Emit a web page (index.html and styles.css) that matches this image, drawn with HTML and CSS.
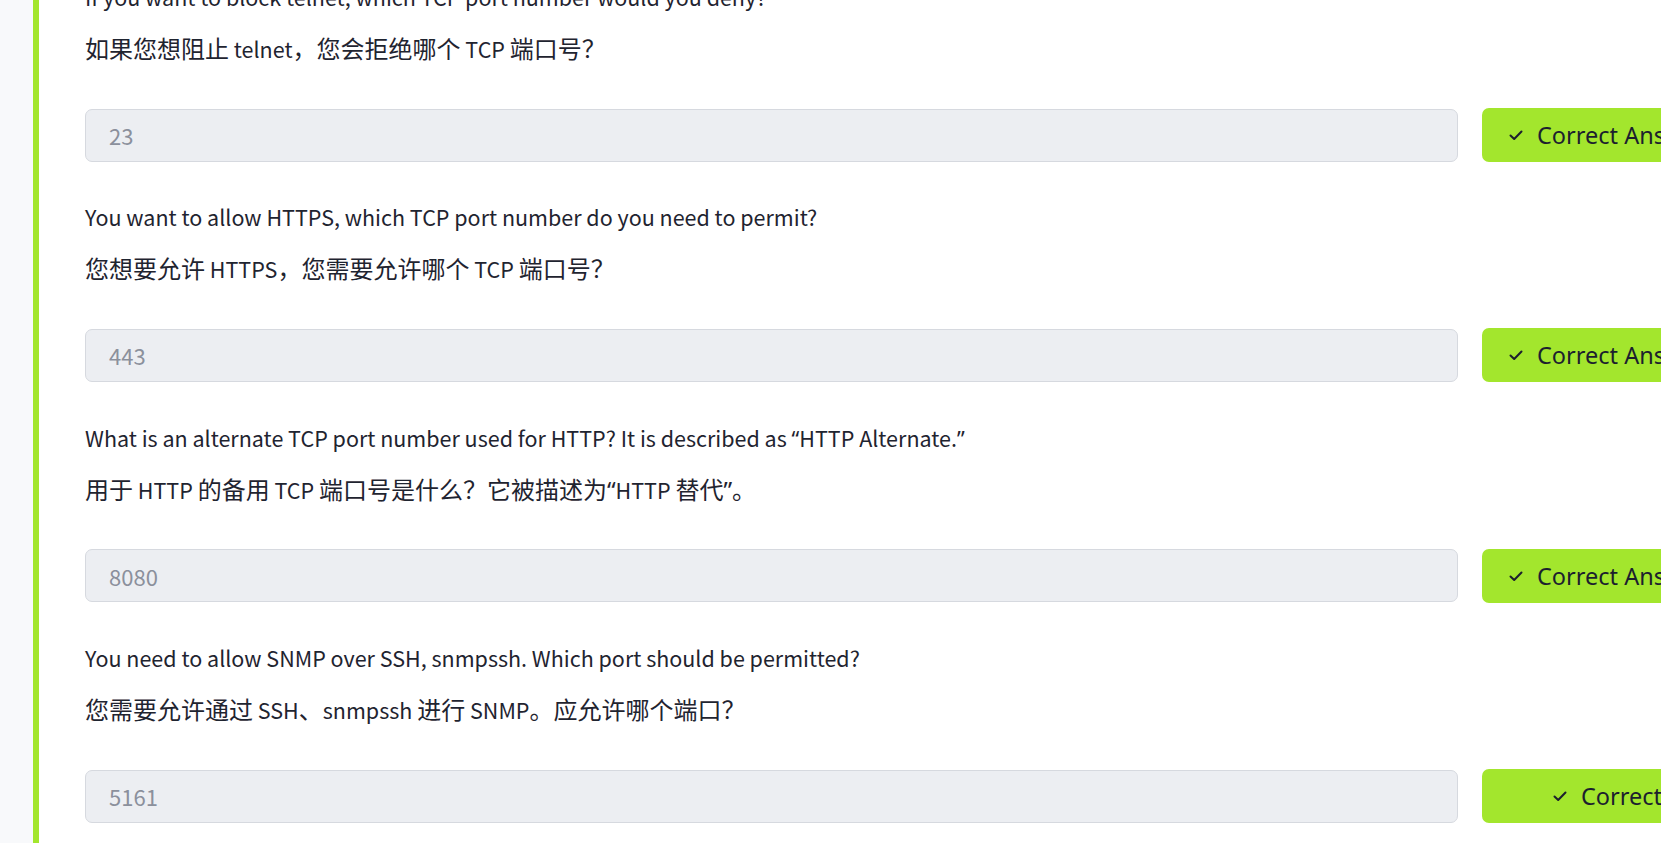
FILE: index.html
```html
<!DOCTYPE html>
<html lang="zh">
<head>
<meta charset="utf-8">
<title>Ports Quiz</title>
<link rel="stylesheet" href="styles.css">
</head>
<body>
<div class="layout">
  <aside class="rail"></aside>
  <main class="content">
    <section class="question">
      <p class="en" lang="en">If you want to block telnet, which TCP port number would you deny?</p>
      <p class="zh">如果您想阻止<span class="lat"> telnet</span>，您会拒绝哪个<span class="lat"> TCP </span>端口号？</p>
      <div class="answer-row">
        <div class="answer-input">23</div>
        <button class="correct-btn"><svg class="check" viewBox="0 0 16 16" width="16" height="16"><path d="M2.5 8.5 L6.2 12 L13.5 4.5" fill="none" stroke="currentColor" stroke-width="2" stroke-linecap="round" stroke-linejoin="round"/></svg><span>Correct Answer</span></button>
      </div>
    </section>
    <section class="question">
      <p class="en" lang="en">You want to allow HTTPS, which TCP port number do you need to permit?</p>
      <p class="zh">您想要允许<span class="lat"> HTTPS</span>，您需要允许哪个<span class="lat"> TCP </span>端口号？</p>
      <div class="answer-row">
        <div class="answer-input">443</div>
        <button class="correct-btn"><svg class="check" viewBox="0 0 16 16" width="16" height="16"><path d="M2.5 8.5 L6.2 12 L13.5 4.5" fill="none" stroke="currentColor" stroke-width="2" stroke-linecap="round" stroke-linejoin="round"/></svg><span>Correct Answer</span></button>
      </div>
    </section>
    <section class="question">
      <p class="en" lang="en">What is an alternate TCP port number used for HTTP? It is described as <span class="q">“</span>HTTP Alternate.<span class="q">”</span></p>
      <p class="zh">用于<span class="lat"> HTTP </span>的备用<span class="lat"> TCP </span>端口号是什么？它被描述为<span class="q">“</span><span class="lat">HTTP </span>替代<span class="q">”</span>。</p>
      <div class="answer-row">
        <div class="answer-input">8080</div>
        <button class="correct-btn"><svg class="check" viewBox="0 0 16 16" width="16" height="16"><path d="M2.5 8.5 L6.2 12 L13.5 4.5" fill="none" stroke="currentColor" stroke-width="2" stroke-linecap="round" stroke-linejoin="round"/></svg><span>Correct Answer</span></button>
      </div>
    </section>
    <section class="question">
      <p class="en" lang="en">You need to allow SNMP over SSH, snmpssh. Which port should be permitted?</p>
      <p class="zh">您需要允许通过<span class="lat"> SSH</span>、<span class="lat">snmpssh </span>进行<span class="lat"> SNMP</span>。应允许哪个端口？</p>
      <div class="answer-row">
        <div class="answer-input">5161</div>
        <button class="correct-btn correct-btn-wide"><svg class="check" viewBox="0 0 16 16" width="16" height="16"><path d="M2.5 8.5 L6.2 12 L13.5 4.5" fill="none" stroke="currentColor" stroke-width="2" stroke-linecap="round" stroke-linejoin="round"/></svg><span>Correct Answer</span></button>
      </div>
    </section>
  </main>
</div>
</body>
</html>
```

FILE: styles.css
```css
html, body {
  margin: 0;
  padding: 0;
  height: 100%;
  overflow: hidden;
  background: #ffffff;
}

body {
  font-family: "Noto Sans CJK SC", "Noto Sans", sans-serif;
  color: #1f2430;
}

.layout {
  display: flex;
  min-height: 100%;
}

.rail {
  flex: 0 0 33px;
  background: #f8f9fb;
}

.content {
  flex: 1;
  min-width: 0;
  border-left: 6px solid #a3e62d;
  padding-left: 46px;
  margin-top: -18px;
}

.question {
  padding-bottom: 40.4px;
}

.en {
  margin: 0;
  height: 30px;
  font-size: 21.5px;
  line-height: 30px;
  white-space: nowrap;
}

.zh {
  margin: 18px 0 0;
  height: 36px;
  font-size: 24px;
  line-height: 36px;
  white-space: nowrap;
}

.lat {
  font-size: 21.5px;
}

.q {
  font-family: "Noto Sans", sans-serif;
}

.answer-row {
  display: flex;
  align-items: center;
  gap: 24px;
  margin-top: 42px;
}

.answer-input {
  flex: 0 0 1373px;
  box-sizing: border-box;
  height: 53px;
  display: flex;
  align-items: center;
  padding-left: 23px;
  background: #eceef2;
  border: 1px solid #d6d9df;
  border-radius: 7px;
  font-size: 22px;
  color: #8b909c;
}

.correct-btn {
  flex: 0 0 auto;
  box-sizing: border-box;
  height: 54px;
  display: flex;
  align-items: center;
  gap: 13px;
  padding: 0 26px;
  background: #a3e62d;
  border: none;
  border-radius: 7px;
  font-family: "Noto Sans", sans-serif;
  font-size: 23.5px;
  color: #1c1f2e;
  white-space: nowrap;
}

.correct-btn-wide {
  padding-left: 70px;
}

.check {
  width: 16px;
  height: 16px;
  flex: 0 0 16px;
}
```
